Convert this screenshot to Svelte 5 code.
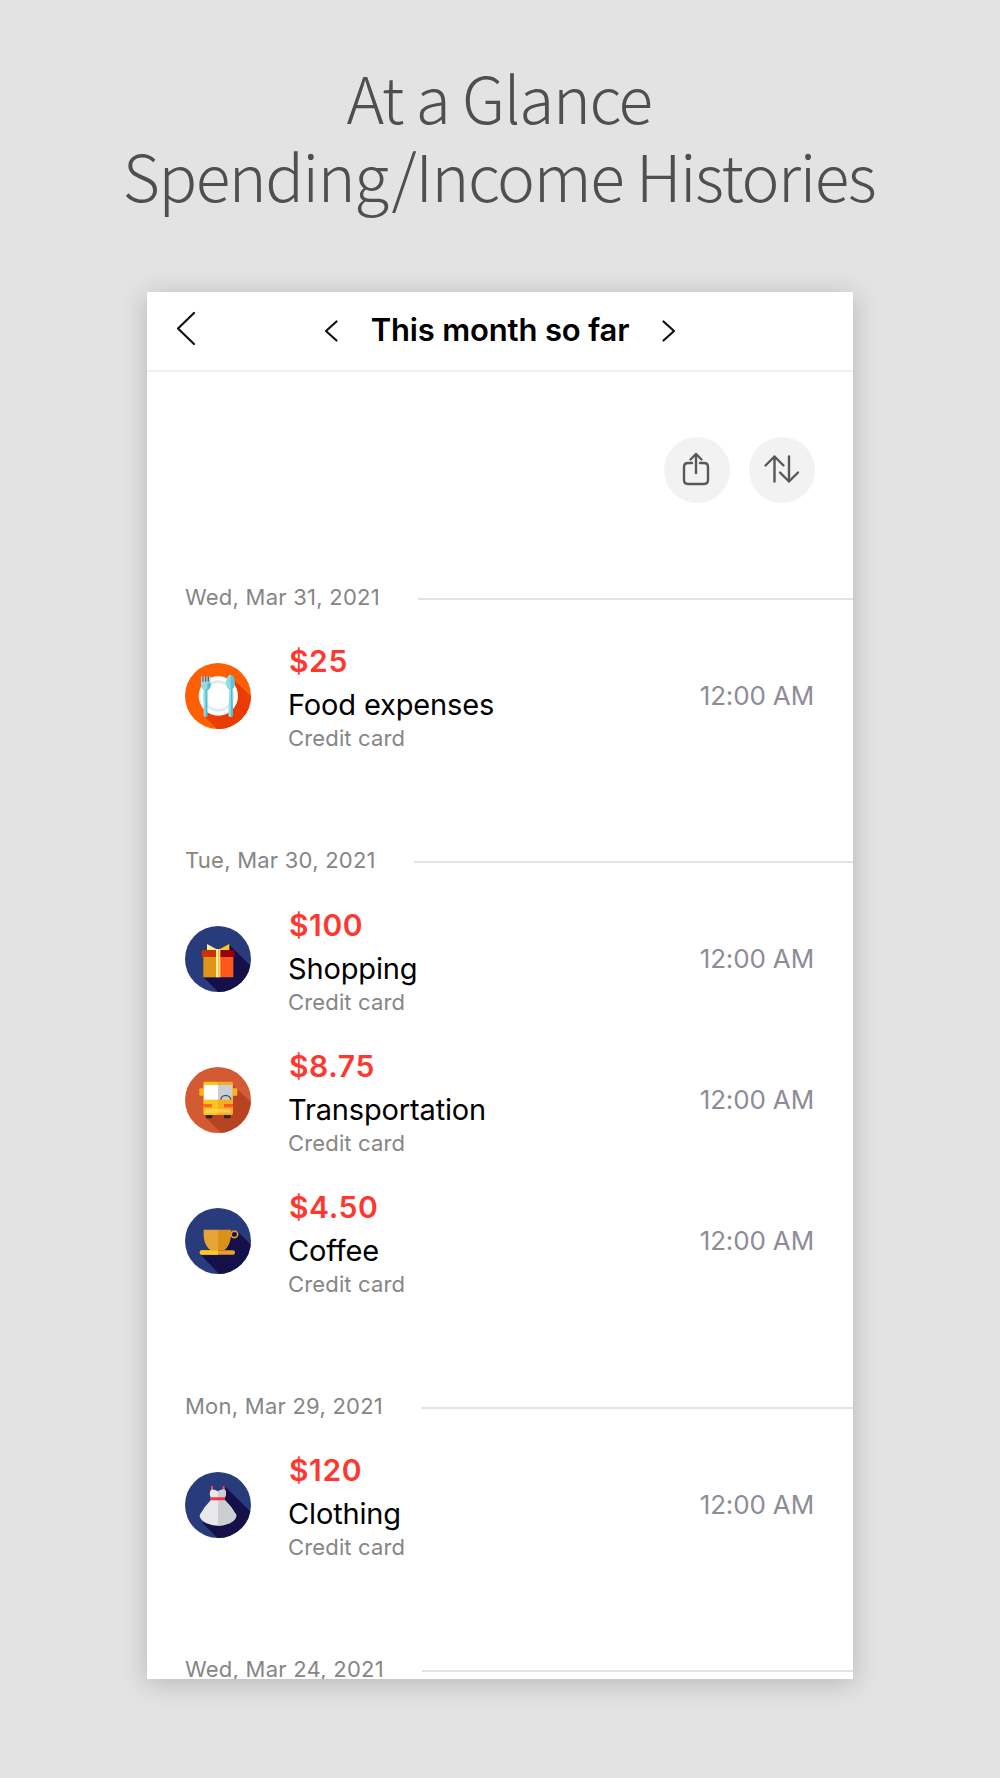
<script lang="ts">
  type Entry = { icon: string; amount: string; name: string };
  type Day = { date: string; entries: Entry[] };

  const days: Day[] = [
    {
      date: "Wed, Mar 31, 2021",
      entries: [{ icon: "food", amount: "$25", name: "Food expenses" }],
    },
    {
      date: "Tue, Mar 30, 2021",
      entries: [
        { icon: "gift", amount: "$100", name: "Shopping" },
        { icon: "bus", amount: "$8.75", name: "Transportation" },
        { icon: "cup", amount: "$4.50", name: "Coffee" },
      ],
    },
    {
      date: "Mon, Mar 29, 2021",
      entries: [{ icon: "dress", amount: "$120", name: "Clothing" }],
    },
    { date: "Wed, Mar 24, 2021", entries: [] },
  ];
</script>

{#snippet icon(kind: string)}
  <svg class="icon" viewBox="0 0 198 198">
    <defs>
      <clipPath id="clip-{kind}"><circle cx="99" cy="99" r="99" /></clipPath>
    </defs>
    <g clip-path="url(#clip-{kind})">
      {#if kind === "food"}
        <rect width="198" height="198" fill="#fd5f02" />
        <path d="M141 45 L210 112 V210 H108 L58 160Z" fill="#e83c03" />
        <circle cx="100" cy="99" r="59" fill="#fff" />
        <circle cx="100" cy="99" r="43" fill="none" stroke="#dcebf0" stroke-width="8" />
        <path d="M48 40h29v27q0 11-10 15v75q-1 5-6 5t-5-5V82q-8-5-8-15z" fill="#8fdbe6" />
        <path d="M62 78h5v84h-5zM69 60h8v7q0 9-10 15V66z" fill="#4dbfd0" />
        <path d="M52 39h4v17h-4zM60 39h4v17h-4zM68 39h4v17h-4z" fill="#b3513b" />
        <ellipse cx="137" cy="58" rx="13" ry="23" fill="#5cc5d6" />
        <path d="M137 35q-13 3-13 23t13 23z" fill="#8fdbe6" />
        <path d="M133 78h9l2 79q-1 5-7 5t-7-5z" fill="#8fdbe6" />
        <path d="M138 78h4l2 79q-1 5-6 5z" fill="#4dbfd0" />
      {:else if kind === "gift"}
        <rect width="198" height="198" fill="#283b7a" />
        <path d="M133 56 L210 133 V210 H112 L54 152Z" fill="#15104a" />
        <path d="M66 54 L99 72 H66z" fill="#ffec9c" />
        <path d="M133 54 L99 72 H133z" fill="#fccb20" />
        <rect x="55" y="86" width="45" height="68" fill="#df9517" />
        <rect x="100" y="86" width="45" height="68" rx="2" fill="#ff5719" />
        <rect x="50" y="72" width="50" height="21" rx="3" fill="#cc3100" />
        <rect x="100" y="72" width="49" height="21" rx="3" fill="#960000" />
        <path d="M93 69h7v85h-7z" fill="#fff0a6" />
        <path d="M100 69h6v85h-6z" fill="#fde06b" />
      {:else if kind === "bus"}
        <rect width="198" height="198" fill="#d45a34" />
        <path d="M143 54 L210 116 V210 H120 L64 153Z" fill="#b84323" />
        <rect x="43" y="64" width="114" height="22" rx="3" fill="#fbb31b" />
        <rect x="62" y="139" width="20" height="15" rx="4" fill="#2c2325" />
        <rect x="117" y="139" width="20" height="15" rx="4" fill="#2c2325" />
        <rect x="55" y="44" width="45" height="100" rx="5" fill="#fdc51c" />
        <path d="M99 44h40q5 0 5 5v90q0 5-5 5H99z" fill="#f6ad20" />
        <rect x="57" y="54" width="42" height="44" fill="#fff" />
        <rect x="99" y="54" width="43" height="44" fill="#cbced3" />
        <path d="M107 98q2-12 15-13 13 1 16 13" fill="none" stroke="#514e51" stroke-width="4" />
        <rect x="55" y="111" width="26" height="10" fill="#ff6726" />
        <rect x="117" y="111" width="27" height="10" fill="#fb5b22" />
        <rect x="62" y="126" width="75" height="11" fill="#ffd76b" opacity="0.65" />
      {:else if kind === "cup"}
        <rect width="198" height="198" fill="#283b7a" />
        <path d="M157 70 L210 122 V210 H114 L46 139Z" fill="#15104a" />
        <circle cx="148" cy="79" r="10" fill="none" stroke="#e5a02d" stroke-width="5" />
        <path d="M56 65h44v62H80q-5 0-9-5-14-16-15-38z" fill="#e7a337" />
        <path d="M99 65h39v18q-1 22-15 39-4 5-9 5H99z" fill="#da9019" />
        <rect x="44" y="127" width="106" height="13" rx="6" fill="#e5a02d" />
        <path d="M50 127h49v13H50q-6-1-6-6 0-6 6-7z" fill="#ffca20" />
      {:else}
        <rect width="198" height="198" fill="#283b7a" />
        <path d="M119 43 L210 132 V210 H109 L54 154Z" fill="#15104a" />
        <path d="M81 42v14M116 42v14" stroke="#f4475a" stroke-width="6" />
        <path d="M78 53q10-2 21 5 10-7 21-5 6 10 0 23v9q20 19 34 44 1 14-20 25-16 7-35 7t-35-7Q43 143 44 129q14-25 33-44v-9q-6-13 1-23z" fill="#e9e9eb" />
        <path d="M99 58q10-7 21-5 6 10 0 23v9q20 19 34 44 1 14-20 25-16 7-35 7z" fill="#cdced1" />
        <path d="M77 76h43v9H77z" fill="#f4344d" />
      {/if}
    </g>
  </svg>
{/snippet}

<main class="page">
  <h1>
    <span class="line">At a Glance</span>
    <span class="line">Spending/Income Histories</span>
  </h1>

  <section class="card">
    <header>
      <svg class="back" viewBox="0 0 22 36"><path d="M19 2 L3 17.5 L19 33" /></svg>
      <nav>
        <svg class="step" viewBox="0 0 14 22"><path d="M12.5 1.5 L2 11 L12.5 20.5" /></svg>
        <h2>This month so far</h2>
        <svg class="step" viewBox="0 0 14 22"><path d="M1.5 1.5 L12 11 L1.5 20.5" /></svg>
      </nav>
    </header>

    <div class="actions">
      <button aria-label="Share">
        <svg viewBox="0 0 66 66">
          <path d="M28 26H24q-4 0-4 4v13q0 4 4 4h16q4 0 4-4V30q0-4-4-4h-4M32 36V17M26.5 22.500L32 17L37.500 22.500" />
        </svg>
      </button>
      <button aria-label="Sort">
        <svg viewBox="0 0 66 66">
          <path d="M25.500 44.500V19.500M16.500 28.500L25.500 19.500L34.500 28.500M40 19.500V44.500M31 35.500L40 44.500L49 35.500" />
        </svg>
      </button>
    </div>

    {#each days as day}
      <div class="day">
        <div class="date">
          <span>{day.date}</span>
          <hr />
        </div>
        {#each day.entries as entry}
          <div class="entry">
            {@render icon(entry.icon)}
            <div class="info">
              <strong>{entry.amount}</strong>
              <span class="name">{entry.name}</span>
              <span class="method">Credit card</span>
            </div>
            <time>12:00 AM</time>
          </div>
        {/each}
      </div>
    {/each}
  </section>
</main>

<style>
  :global(body) {
    margin: 0;
    background: #e3e3e3;
  }

  .page {
    box-sizing: border-box;
    height: 1778px;
    padding-top: 58px;
    overflow: hidden;
    background: #e3e3e3;
    font-family: Inter, "Liberation Sans", sans-serif;
  }

  h1 {
    display: flex;
    flex-direction: column;
    align-items: center;
    height: 234px;
    margin: 0;
    padding-right: 2px;
    color: #4f4f4f;
    font: 300 64px/77.5px "Noto Sans CJK KR", "Noto Sans CJK SC", sans-serif;
  }

  .line {
    white-space: nowrap;
    letter-spacing: -1.4px;
  }

  .card {
    box-sizing: border-box;
    width: 706px;
    height: 1387px;
    margin-left: 147px;
    overflow: hidden;
    background: #fff;
    box-shadow: 0 4px 26px rgba(0, 0, 0, 0.2);
  }

  header {
    box-sizing: border-box;
    display: grid;
    grid-template-columns: 130px 1fr 130px;
    align-items: center;
    height: 80px;
    padding: 0 0 2px;
    border-bottom: 2px solid #f1f1f1;
  }

  header svg path {
    fill: none;
    stroke: #111;
    stroke-width: 2.2;
    stroke-linecap: round;
    stroke-linejoin: round;
  }

  .back {
    width: 22px;
    height: 36px;
    margin: 0 0 2px 28px;
  }

  nav {
    display: flex;
    align-items: center;
    justify-content: center;
    gap: 33px;
  }

  .step {
    width: 14px;
    height: 22px;
    margin-top: 1px;
  }

  h2 {
    margin: 0;
    font-size: 31px;
    font-weight: 600;
    line-height: 40px;
    letter-spacing: -0.15px;
    white-space: nowrap;
  }

  .actions {
    box-sizing: border-box;
    display: flex;
    align-items: center;
    justify-content: flex-end;
    gap: 19px;
    height: 197px;
    padding: 0 38px 2px 0;
  }

  button {
    width: 66px;
    height: 66px;
    padding: 0;
    border: 0;
    border-radius: 50%;
    background: #f2f2f2;
  }

  button svg {
    display: block;
    width: 66px;
    height: 66px;
  }

  button path {
    fill: none;
    stroke: #585858;
    stroke-width: 2.4;
    stroke-linecap: round;
    stroke-linejoin: round;
  }

  .day {
    padding-bottom: 66.5px;
  }

  .date {
    display: flex;
    align-items: center;
    gap: 38px;
    height: 56px;
    padding-left: 38px;
    color: #868686;
    font-size: 22px;
    letter-spacing: 0.24px;
    white-space: nowrap;
  }

  .date span {
    margin-bottom: 1px;
  }

  hr {
    flex: 1;
    height: 2px;
    margin: 3px 0 0;
    border: 0;
    background: #e3e3e3;
  }

  .entry {
    display: flex;
    align-items: center;
    height: 141px;
    padding: 0 39px 0 37.5px;
  }

  .icon {
    width: 66px;
    height: 66px;
  }

  .info {
    display: flex;
    flex: 1;
    flex-direction: column;
    height: 113px;
    margin-left: 37.5px;
    white-space: nowrap;
  }

  strong {
    margin-left: 1px;
    color: #ff382f;
    font-size: 30px;
    font-weight: 600;
    line-height: 44px;
    letter-spacing: 0.6px;
  }

  .name {
    color: #000;
    font-size: 29px;
    line-height: 44px;
    letter-spacing: -0.15px;
  }

  .method {
    color: #868686;
    font-size: 22px;
    line-height: 22px;
    letter-spacing: 0.15px;
  }

  time {
    margin-bottom: 1px;
    color: #8e8c99;
    font-size: 26px;
    letter-spacing: -0.15px;
  }
</style>
